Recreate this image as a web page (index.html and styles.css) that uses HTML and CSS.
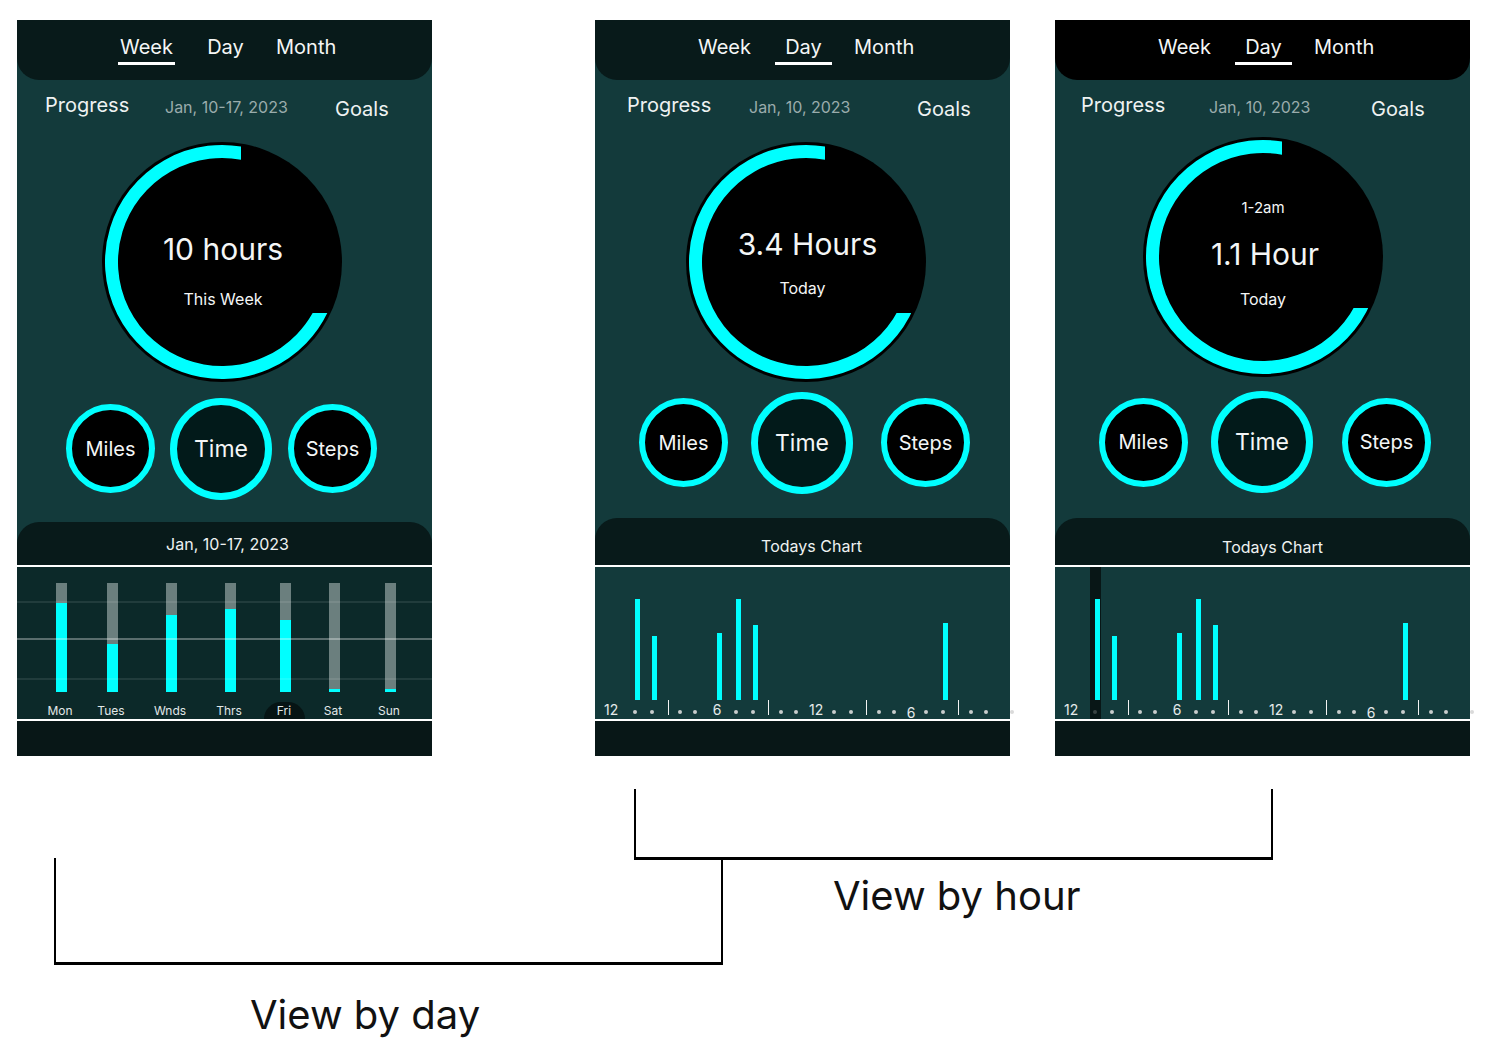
FILE: index.html
```html
<!DOCTYPE html>
<html lang="en">
<head>
<meta charset="utf-8">
<title>Activity views</title>
<link rel="stylesheet" href="styles.css">
</head>
<body>
<main class="board">

  <!-- WEEK VIEW -->
  <section class="phone phone--week">
    <header class="topbar">
      <nav class="tabs">
        <span class="tab tab--active">Week</span>
        <span class="tab">Day</span>
        <span class="tab">Month</span>
      </nav>
    </header>
    <div class="meta">
      <span class="meta__title">Progress</span>
      <span class="meta__date">Jan, 10-17, 2023</span>
      <span class="meta__goals">Goals</span>
    </div>
    <div class="ring-wrap">
      <div class="ring">
        <svg class="ring__svg" viewBox="0 0 240 240" width="240" height="240">
          <defs>
            <clipPath id="arcClip1"><polygon points="0,0 139,0 139,120 120,120 120,171 240,171 240,240 0,240"/></clipPath>
          </defs>
          <circle cx="120" cy="120" r="120" fill="#000"/>
          <path d="M146.73 12.78 A110.5 110.5 0 1 0 221.72 163.17" fill="none" stroke="#00ffff" stroke-width="13" clip-path="url(#arcClip1)"/>
        </svg>
        <div class="ring__text">
          <span class="ring__value">10 hours</span>
          <span class="ring__caption">This Week</span>
        </div>
      </div>
    </div>
    <div class="metrics">
      <div class="metric">Miles</div>
      <div class="metric metric--time">Time</div>
      <div class="metric metric--steps">Steps</div>
    </div>
    <div class="chart-card">
      <div class="chart-card__head">Jan, 10-17, 2023</div>
      <div class="week-chart">
        <div class="week-chart__cols">
          <div class="day"><div class="day__track"><div class="day__fill" style="height:89px"></div></div><span class="day__label">Mon</span></div>
          <div class="day"><div class="day__track"><div class="day__fill" style="height:48px"></div></div><span class="day__label">Tues</span></div>
          <div class="day"><div class="day__track"><div class="day__fill" style="height:77px"></div></div><span class="day__label">Wnds</span></div>
          <div class="day"><div class="day__track"><div class="day__fill" style="height:83px"></div></div><span class="day__label">Thrs</span></div>
          <div class="day"><div class="day__track"><div class="day__fill" style="height:72px"></div></div><span class="day__label day__label--current">Fri</span></div>
          <div class="day"><div class="day__track"><div class="day__fill" style="height:3px"></div></div><span class="day__label">Sat</span></div>
          <div class="day"><div class="day__track"><div class="day__fill" style="height:3px"></div></div><span class="day__label">Sun</span></div>
        </div>
        <div class="gridline gridline--a"></div>
        <div class="gridline gridline--b"></div>
        <div class="gridline gridline--c"></div>
      </div>
      <div class="chart-card__foot"></div>
    </div>
  </section>

  <!-- DAY VIEW -->
  <section class="phone phone--day">
    <header class="topbar">
      <nav class="tabs">
        <span class="tab">Week</span>
        <span class="tab tab--active">Day</span>
        <span class="tab">Month</span>
      </nav>
    </header>
    <div class="meta">
      <span class="meta__title">Progress</span>
      <span class="meta__date">Jan, 10, 2023</span>
      <span class="meta__goals">Goals</span>
    </div>
    <div class="ring-wrap">
      <div class="ring">
        <svg class="ring__svg" viewBox="0 0 240 240" width="240" height="240">
          <defs>
            <clipPath id="arcClip2"><polygon points="0,0 139,0 139,120 120,120 120,171 240,171 240,240 0,240"/></clipPath>
          </defs>
          <circle cx="120" cy="120" r="120" fill="#000"/>
          <path d="M146.73 12.78 A110.5 110.5 0 1 0 221.72 163.17" fill="none" stroke="#00ffff" stroke-width="13" clip-path="url(#arcClip2)"/>
        </svg>
        <div class="ring__text">
          <span class="ring__value ring__value--shift">3.4 Hours</span>
          <span class="ring__caption ring__caption--shift">Today</span>
        </div>
      </div>
    </div>
    <div class="metrics">
      <div class="metric">Miles</div>
      <div class="metric metric--time">Time</div>
      <div class="metric metric--steps">Steps</div>
    </div>
    <div class="chart-card">
      <div class="chart-card__head">Todays Chart</div>
      <div class="hour-chart">
        <div class="hcol"><div class="hcol__zone"></div><div class="hcol__axis"><span class="hcol__label">12</span></div></div>
        <div class="hcol"><div class="hcol__zone"><span class="hbar" style="height:101px"></span></div><div class="hcol__axis"><span class="hcol__dot"></span></div></div>
        <div class="hcol"><div class="hcol__zone"><span class="hbar" style="height:64px"></span></div><div class="hcol__axis"><span class="hcol__dot"></span></div></div>
        <div class="hcol"><div class="hcol__zone"></div><div class="hcol__axis"><span class="hcol__tick"></span></div></div>
        <div class="hcol"><div class="hcol__zone"></div><div class="hcol__axis"><span class="hcol__dot"></span></div></div>
        <div class="hcol"><div class="hcol__zone"></div><div class="hcol__axis"><span class="hcol__dot"></span></div></div>
        <div class="hcol"><div class="hcol__zone"><span class="hbar" style="height:67px"></span></div><div class="hcol__axis"><span class="hcol__label">6</span></div></div>
        <div class="hcol"><div class="hcol__zone"><span class="hbar" style="height:101px"></span></div><div class="hcol__axis"><span class="hcol__dot"></span></div></div>
        <div class="hcol"><div class="hcol__zone"><span class="hbar" style="height:75px"></span></div><div class="hcol__axis"><span class="hcol__dot"></span></div></div>
        <div class="hcol"><div class="hcol__zone"></div><div class="hcol__axis"><span class="hcol__tick"></span></div></div>
        <div class="hcol"><div class="hcol__zone"></div><div class="hcol__axis"><span class="hcol__dot"></span></div></div>
        <div class="hcol"><div class="hcol__zone"></div><div class="hcol__axis"><span class="hcol__dot"></span></div></div>
        <div class="hcol"><div class="hcol__zone"></div><div class="hcol__axis"><span class="hcol__label">12</span></div></div>
        <div class="hcol"><div class="hcol__zone"></div><div class="hcol__axis"><span class="hcol__dot"></span></div></div>
        <div class="hcol"><div class="hcol__zone"></div><div class="hcol__axis"><span class="hcol__dot"></span></div></div>
        <div class="hcol"><div class="hcol__zone"></div><div class="hcol__axis"><span class="hcol__tick"></span></div></div>
        <div class="hcol"><div class="hcol__zone"></div><div class="hcol__axis"><span class="hcol__dot"></span></div></div>
        <div class="hcol"><div class="hcol__zone"></div><div class="hcol__axis"><span class="hcol__dot"></span></div></div>
        <div class="hcol"><div class="hcol__zone"></div><div class="hcol__axis"><span class="hcol__label hcol__label--low">6</span></div></div>
        <div class="hcol"><div class="hcol__zone"></div><div class="hcol__axis"><span class="hcol__dot"></span></div></div>
        <div class="hcol"><div class="hcol__zone"><span class="hbar" style="height:77px"></span></div><div class="hcol__axis"><span class="hcol__dot"></span></div></div>
        <div class="hcol"><div class="hcol__zone"></div><div class="hcol__axis"><span class="hcol__tick"></span></div></div>
        <div class="hcol"><div class="hcol__zone"></div><div class="hcol__axis"><span class="hcol__dot"></span></div></div>
        <div class="hcol"><div class="hcol__zone"></div><div class="hcol__axis"><span class="hcol__dot"></span></div></div>
        <div class="hcol"><div class="hcol__zone"></div><div class="hcol__axis"><span class="hcol__dot hcol__dot--faint"></span></div></div>
      </div>
      <div class="chart-card__foot"></div>
    </div>
  </section>

  <!-- HOUR VIEW -->
  <section class="phone phone--hour">
    <header class="topbar">
      <nav class="tabs">
        <span class="tab">Week</span>
        <span class="tab tab--active">Day</span>
        <span class="tab">Month</span>
      </nav>
    </header>
    <div class="meta">
      <span class="meta__title">Progress</span>
      <span class="meta__date">Jan, 10, 2023</span>
      <span class="meta__goals">Goals</span>
    </div>
    <div class="ring-wrap">
      <div class="ring">
        <svg class="ring__svg" viewBox="0 0 240 240" width="240" height="240">
          <defs>
            <clipPath id="arcClip3"><polygon points="0,0 139,0 139,120 120,120 120,171 240,171 240,240 0,240"/></clipPath>
          </defs>
          <circle cx="120" cy="120" r="120" fill="#000"/>
          <path d="M146.73 12.78 A110.5 110.5 0 1 0 221.72 163.17" fill="none" stroke="#00ffff" stroke-width="13" clip-path="url(#arcClip3)"/>
        </svg>
        <div class="ring__text">
          <span class="ring__range">1-2am</span>
          <span class="ring__value">1.1 Hour</span>
          <span class="ring__caption">Today</span>
        </div>
      </div>
    </div>
    <div class="metrics">
      <div class="metric">Miles</div>
      <div class="metric metric--time">Time</div>
      <div class="metric metric--steps">Steps</div>
    </div>
    <div class="chart-card">
      <div class="chart-card__head">Todays Chart</div>
      <div class="hour-chart">
        <div class="hcol"><div class="hcol__zone"></div><div class="hcol__axis"><span class="hcol__label">12</span></div></div>
        <div class="hcol hcol--selected"><div class="hcol__zone"><span class="hbar" style="height:101px"></span></div><div class="hcol__axis"><span class="hcol__dot hcol__dot--dim"></span></div></div>
        <div class="hcol"><div class="hcol__zone"><span class="hbar" style="height:64px"></span></div><div class="hcol__axis"><span class="hcol__dot"></span></div></div>
        <div class="hcol"><div class="hcol__zone"></div><div class="hcol__axis"><span class="hcol__tick"></span></div></div>
        <div class="hcol"><div class="hcol__zone"></div><div class="hcol__axis"><span class="hcol__dot"></span></div></div>
        <div class="hcol"><div class="hcol__zone"></div><div class="hcol__axis"><span class="hcol__dot"></span></div></div>
        <div class="hcol"><div class="hcol__zone"><span class="hbar" style="height:67px"></span></div><div class="hcol__axis"><span class="hcol__label">6</span></div></div>
        <div class="hcol"><div class="hcol__zone"><span class="hbar" style="height:101px"></span></div><div class="hcol__axis"><span class="hcol__dot"></span></div></div>
        <div class="hcol"><div class="hcol__zone"><span class="hbar" style="height:75px"></span></div><div class="hcol__axis"><span class="hcol__dot"></span></div></div>
        <div class="hcol"><div class="hcol__zone"></div><div class="hcol__axis"><span class="hcol__tick"></span></div></div>
        <div class="hcol"><div class="hcol__zone"></div><div class="hcol__axis"><span class="hcol__dot"></span></div></div>
        <div class="hcol"><div class="hcol__zone"></div><div class="hcol__axis"><span class="hcol__dot"></span></div></div>
        <div class="hcol"><div class="hcol__zone"></div><div class="hcol__axis"><span class="hcol__label">12</span></div></div>
        <div class="hcol"><div class="hcol__zone"></div><div class="hcol__axis"><span class="hcol__dot"></span></div></div>
        <div class="hcol"><div class="hcol__zone"></div><div class="hcol__axis"><span class="hcol__dot"></span></div></div>
        <div class="hcol"><div class="hcol__zone"></div><div class="hcol__axis"><span class="hcol__tick"></span></div></div>
        <div class="hcol"><div class="hcol__zone"></div><div class="hcol__axis"><span class="hcol__dot"></span></div></div>
        <div class="hcol"><div class="hcol__zone"></div><div class="hcol__axis"><span class="hcol__dot"></span></div></div>
        <div class="hcol"><div class="hcol__zone"></div><div class="hcol__axis"><span class="hcol__label hcol__label--low">6</span></div></div>
        <div class="hcol"><div class="hcol__zone"></div><div class="hcol__axis"><span class="hcol__dot"></span></div></div>
        <div class="hcol"><div class="hcol__zone"><span class="hbar" style="height:77px"></span></div><div class="hcol__axis"><span class="hcol__dot"></span></div></div>
        <div class="hcol"><div class="hcol__zone"></div><div class="hcol__axis"><span class="hcol__tick"></span></div></div>
        <div class="hcol"><div class="hcol__zone"></div><div class="hcol__axis"><span class="hcol__dot"></span></div></div>
        <div class="hcol"><div class="hcol__zone"></div><div class="hcol__axis"><span class="hcol__dot"></span></div></div>
        <div class="hcol"><div class="hcol__zone"></div><div class="hcol__axis"><span class="hcol__dot hcol__dot--faint"></span></div></div>
      </div>
      <div class="chart-card__foot"></div>
    </div>
  </section>
</main>

<section class="notes">
  <div class="bracket bracket--hour"></div>
  <div class="bracket bracket--day"></div>
  <p class="note note--hour">View by hour</p>
  <p class="note note--day">View by day</p>
</section>
</body>
</html>
```

FILE: styles.css
```css
* { box-sizing: border-box; }

html, body {
  margin: 0;
  background: #ffffff;
}

body {
  width: 1491px;
  height: 1059px;
  overflow: hidden;
  font-family: Inter, "Noto Sans", "Liberation Sans", sans-serif;
  color: #f1f4f4;
}

.board {
  display: flex;
  align-items: flex-start;
  padding: 20px 0 0 17px;
}

/* ---------- phone frame ---------- */
.phone {
  --meta-pl: 28px;
  --meta-c1: 120px;
  --meta-c2: 170px;
  --meta-h: 62px;
  --ring-x: 85px;
  --metrics-mt: 15.5px;
  --metrics-pl: 49px;
  --gap1: 15px;
  --gap2: 16px;
  --head-h: 45px;
  --head-pt: 12px;
  --head-pl: 6px;

  width: 415px;
  height: 736px;
  background: #133a3b;
  display: flex;
  flex-direction: column;
}

.phone--day {
  margin-left: 163px;
  --meta-pl: 32px;
  --meta-c1: 122px;
  --meta-c2: 168px;
  --ring-x: 91px;
  --metrics-mt: 9.5px;
  --metrics-pl: 44px;
  --gap1: 23px;
  --gap2: 28px;
  --head-h: 49px;
  --head-pt: 18px;
  --head-pl: 18px;
}

.phone--hour {
  margin-left: 45px;
  --meta-pl: 26px;
  --meta-c1: 128px;
  --meta-c2: 162px;
  --meta-h: 57px;
  --ring-x: 88px;
  --metrics-mt: 14px;
  --metrics-pl: 44px;
  --gap1: 23px;
  --gap2: 29px;
  --head-h: 49px;
  --head-pt: 19px;
  --head-pl: 20px;
}

/* ---------- top tabs ---------- */
.topbar {
  height: 60px;
  flex: 0 0 60px;
  background: #081a1a;
  border-radius: 0 0 22px 22px;
  padding-top: 15px;
}

.phone--hour .topbar { background: #000000; }

.tabs {
  display: flex;
  gap: 22px;
  padding-left: 101px;
}

.tab {
  display: flex;
  flex-direction: column;
  align-items: center;
  min-width: 57px;
  font-size: 20px;
  line-height: 24px;
  color: #f4f6f6;
}

.tab::after {
  content: "";
  display: block;
  width: 57px;
  height: 3px;
  margin-top: 3px;
  background: transparent;
}

.tab--active::after { background: #ffffff; }

/* ---------- progress row ---------- */
.meta {
  display: grid;
  grid-template-columns: var(--meta-c1) var(--meta-c2) auto;
  align-items: start;
  height: var(--meta-h);
  flex: 0 0 var(--meta-h);
  padding-left: var(--meta-pl);
}

.meta__title {
  margin-top: 13px;
  font-size: 20px;
  line-height: 24px;
  color: #eef2f2;
}

.meta__date {
  margin-top: 17px;
  font-size: 16px;
  line-height: 20px;
  color: #9aacac;
  white-space: nowrap;
}

.meta__goals {
  margin-top: 17px;
  font-size: 20px;
  line-height: 24px;
  color: #eef2f2;
}

/* ---------- main ring ---------- */
.ring-wrap {
  padding-left: var(--ring-x);
  flex: 0 0 240px;
}

.ring {
  position: relative;
  width: 240px;
  height: 240px;
}

.ring__svg { display: block; }

.ring__text {
  position: absolute;
  inset: 0;
  display: flex;
  flex-direction: column;
  align-items: center;
  justify-content: center;
  color: #f4f6f6;
}

.phone--week .ring__text { padding-top: 15px; padding-left: 2px; }
.phone--hour .ring__text { padding-bottom: 7px; }

.ring__value {
  font-size: 30px;
  line-height: 36px;
  white-space: nowrap;
}

.ring__caption {
  font-size: 16px;
  line-height: 20px;
  margin-top: 22px;
}

.ring__range {
  font-size: 15px;
  line-height: 18px;
  margin-bottom: 19px;
}

.phone--hour .ring__caption { margin-top: 17px; }
.phone--hour .ring__value { margin-left: 4px; }

.ring__value--shift { margin-left: 3px; margin-top: 0; }
.ring__caption--shift { margin-top: 16px; margin-right: 7px; }

/* ---------- metric buttons ---------- */
.metrics {
  display: flex;
  align-items: center;
  height: 102px;
  flex: 0 0 102px;
  margin-top: var(--metrics-mt);
  padding-left: var(--metrics-pl);
}

.metric {
  width: 89px;
  height: 89px;
  border-radius: 50%;
  border: 6px solid #00ffff;
  background: #000000;
  display: flex;
  align-items: center;
  justify-content: center;
  font-size: 20px;
  color: #f4f6f6;
}

.metric--time {
  width: 102px;
  height: 102px;
  border-width: 7px;
  background: #021a1a;
  font-size: 23px;
  margin-left: var(--gap1);
}

.metric--steps { margin-left: var(--gap2); }

/* ---------- chart card ---------- */
.chart-card {
  margin-top: auto;
  display: flex;
  flex-direction: column;
}

.chart-card__head {
  height: var(--head-h);
  padding-top: var(--head-pt);
  padding-left: var(--head-pl);
  background: #081a1a;
  border-radius: 22px 22px 0 0;
  border-bottom: 2px solid #ffffff;
  text-align: center;
  font-size: 16px;
  line-height: 20px;
  color: #eef2f2;
}

.chart-card__foot {
  height: 37px;
  background: #081717;
  border-top: 2px solid #ffffff;
}

/* ---------- week chart ---------- */
.week-chart {
  position: relative;
  height: 152px;
  background: #0c2929;
}

.week-chart__cols {
  display: grid;
  grid-template-columns: 51px 59px 59px 55px 49px 56px 50px;
  padding-left: 19.5px;
  height: 152px;
}

.day {
  width: 50px;
  display: flex;
  flex-direction: column;
  align-items: center;
}

.day__track {
  margin-top: 16px;
  width: 11px;
  height: 109px;
  background: #6b7f7e;
  display: flex;
  flex-direction: column;
  justify-content: flex-end;
}

.day__fill {
  width: 11px;
  background: #00ffff;
}

.day__label {
  margin-top: 10px;
  margin-right: 3px;
  height: 17px;
  line-height: 17px;
  font-size: 12px;
  color: #e2e8e8;
  white-space: nowrap;
}

.day__label--current {
  width: 41px;
  text-align: center;
  background: #061414;
  border-radius: 21px 21px 0 0;
}

.gridline {
  position: absolute;
  left: 0;
  right: 0;
  height: 2px;
}

.gridline--a { top: 34px; background: rgba(255, 255, 255, 0.09); }
.gridline--b { top: 71px; background: rgba(255, 255, 255, 0.32); }
.gridline--c { top: 111px; background: rgba(255, 255, 255, 0.09); }

/* ---------- hour chart ---------- */
.hour-chart {
  display: grid;
  grid-template-columns: 24px 17px 16px 12px 15px 22px 19px 17px 15px 13px 15px 20px 18px 17px 15px 13px 15px 17px 15px 17px 15px 13px 15px 26px 14px;
  padding-left: 9px;
  height: 152px;
}

.hcol {
  width: 14px;
  height: 152px;
  display: grid;
  grid-template-rows: 133px 19px;
}

.hcol--selected {
  background: linear-gradient(#081616, #081616) center / 11px 100% no-repeat;
}

.hcol__zone {
  display: flex;
  align-items: flex-end;
  justify-content: center;
}

.hbar {
  display: block;
  width: 5px;
  margin-left: 5px;
  background: #00ffff;
}

.hcol__axis {
  display: flex;
  justify-content: center;
  align-items: flex-start;
}

.hcol__label {
  margin-top: 2px;
  font-size: 14px;
  line-height: 16px;
  color: #e6ebeb;
  white-space: nowrap;
}

.hcol__label--low { margin-top: 5px; }

.hcol__dot {
  margin-top: 10px;
  width: 4px;
  height: 4px;
  border-radius: 50%;
  background: #c8cccc;
}

.hcol__dot--dim { background: #3a4444; }
.hcol__dot--faint { background: #dadada; }

.hcol__tick {
  width: 1px;
  height: 15px;
  background: #f2f2f2;
}

/* ---------- annotations ---------- */
.notes {
  position: relative;
  height: 303px;
  width: 1491px;
}

.bracket {
  position: absolute;
  border-left: 2px solid #000;
  border-right: 2px solid #000;
  border-bottom: 3px solid #000;
}

.bracket--hour {
  left: 634px;
  top: 33px;
  width: 639px;
  height: 71px;
}

.bracket--day {
  left: 54px;
  top: 102px;
  width: 669px;
  height: 107px;
}

.note {
  position: absolute;
  margin: 0;
  font-size: 40px;
  line-height: 48px;
  color: #111111;
  white-space: nowrap;
}

.note--hour { left: 833px; top: 116px; }
.note--day { left: 250px; top: 235px; }
```
